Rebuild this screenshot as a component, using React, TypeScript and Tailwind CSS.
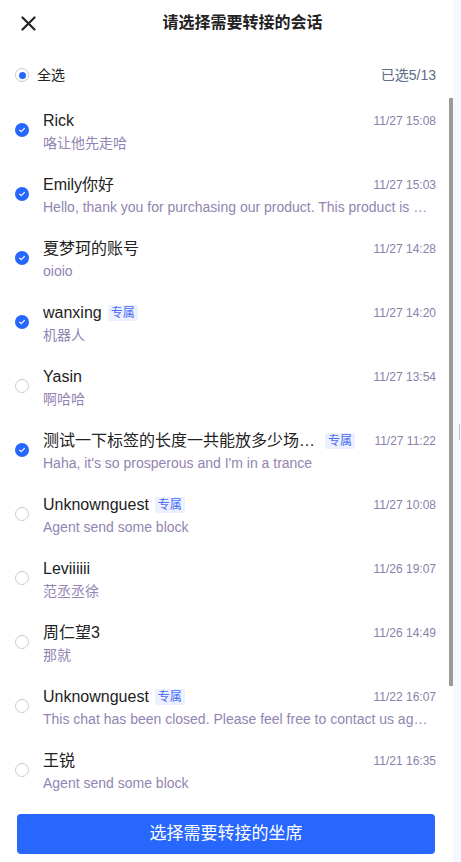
import React from "react";

type Row = { name: string; msg: string; time: string; tag?: boolean; checked?: boolean };

const rows: Row[] = [
  { name: "Rick", msg: "咯让他先走哈", time: "11/27 15:08", checked: true },
  { name: "Emily你好", msg: "Hello, thank you for purchasing our product. This product is very good", time: "11/27 15:03", checked: true },
  { name: "夏梦珂的账号", msg: "oioio", time: "11/27 14:28", checked: true },
  { name: "wanxing", msg: "机器人", time: "11/27 14:20", tag: true, checked: true },
  { name: "Yasin", msg: "啊哈哈", time: "11/27 13:54" },
  { name: "测试一下标签的长度一共能放多少场景呢", msg: "Haha, it's so prosperous and I'm in a trance", time: "11/27 11:22", tag: true, checked: true },
  { name: "Unknownguest", msg: "Agent send some block", time: "11/27 10:08", tag: true },
  { name: "Leviiiiii", msg: "范丞丞徐", time: "11/26 19:07" },
  { name: "周仁望3", msg: "那就", time: "11/26 14:49" },
  { name: "Unknownguest", msg: "This chat has been closed. Please feel free to contact us again at any time", time: "11/22 16:07", tag: true },
  { name: "王锐", msg: "Agent send some block", time: "11/21 16:35" },
];

function Check({ on }: { on?: boolean }) {
  if (on)
    return (
      <span className="mt-[13px] flex h-[14px] w-[14px] shrink-0 items-center justify-center rounded-full bg-[#2767fd]">
        <svg width="8" height="8" viewBox="0 0 8 8" fill="none">
          <path d="M1.6 4.1 3.3 5.6 6.4 2.5" stroke="white" strokeWidth="1.1" strokeLinecap="round" strokeLinejoin="round" />
        </svg>
      </span>
    );
  return <span className="mt-[13px] h-[14px] w-[14px] shrink-0 rounded-full border border-[#c9c9cf] bg-white" />;
}

export default function App() {
  return (
    <div
      className="flex h-[862px] w-[461px] overflow-hidden bg-white"
      style={{ fontFamily: '"Liberation Sans", "Noto Sans CJK SC", sans-serif' }}
    >
      <div className="relative flex w-[453px] shrink-0 flex-col bg-white">
        {/* header */}
        <div className="flex h-[46px] items-center">
          <div className="flex w-[56px] justify-center">
            <svg width="15" height="15" viewBox="0 0 15 15" fill="none">
              <path d="M1.5 1.5 13.5 13.5M13.5 1.5 1.5 13.5" stroke="#222" strokeWidth="2.2" strokeLinecap="round" />
            </svg>
          </div>
          <div className="-ml-[56px] flex flex-1 justify-center pl-[32px] text-[16px] font-bold text-[#222]">
            请选择需要转接的会话
          </div>
        </div>

        {/* select all */}
        <div className="mt-[16px] flex h-[26px] items-center pl-[15px] pr-[17px]">
          <span className="flex h-[14px] w-[14px] items-center justify-center rounded-full border border-[#c9c9cf]">
            <span className="h-[7px] w-[7px] rounded-full bg-[#2767fd]" />
          </span>
          <span className="ml-[8px] text-[14px] text-[#222]">全选</span>
          <span className="ml-auto text-[14px] text-[#5c6b86]">已选5/13</span>
        </div>

        {/* list */}
        <div className="relative mt-[10px] flex flex-col">
          {rows.map((r, i) => (
            <div key={i} className="flex h-[64px] items-start pl-[15px] pr-[17px] pt-[12px]">
              <Check on={r.checked} />
              <div className="ml-[14px] flex min-w-0 flex-1 flex-col">
                <div className="flex h-[22px] items-center">
                  <span className="min-w-0 max-w-[276px] truncate text-[16px] text-[#222]">{r.name}</span>
                  {r.tag && (
                    <span className="ml-[6px] shrink-0 rounded-[2px] bg-[#edf0ff] px-[3px] text-[12px] leading-[16px] text-[#4c6ef5]">
                      专属
                    </span>
                  )}
                  <span className="ml-auto shrink-0 pl-[16px] text-[12px] text-[#8b80a9]">{r.time}</span>
                </div>
                <div className="mt-[1px] truncate pr-[3px] text-[14px] leading-[20px] text-[#9284b3]">{r.msg}</div>
              </div>
            </div>
          ))}
          <div className="absolute right-0 top-0 h-[588px] w-[4px] bg-[#9a9a9a]" />
        </div>

        {/* button */}
        <div className="mt-[12px] px-[17px]">
          <div className="flex h-[40px] w-[418px] items-center justify-center rounded-[4px] bg-[#2767fd] text-[17px] text-white">
            选择需要转接的坐席
          </div>
        </div>
      </div>
      <div className="relative flex-1 bg-[#f5f8fc]">
        <div className="absolute left-[6px] top-[424px] h-[16px] w-[1px] bg-[#b8bcc4]" />
      </div>
    </div>
  );
}
